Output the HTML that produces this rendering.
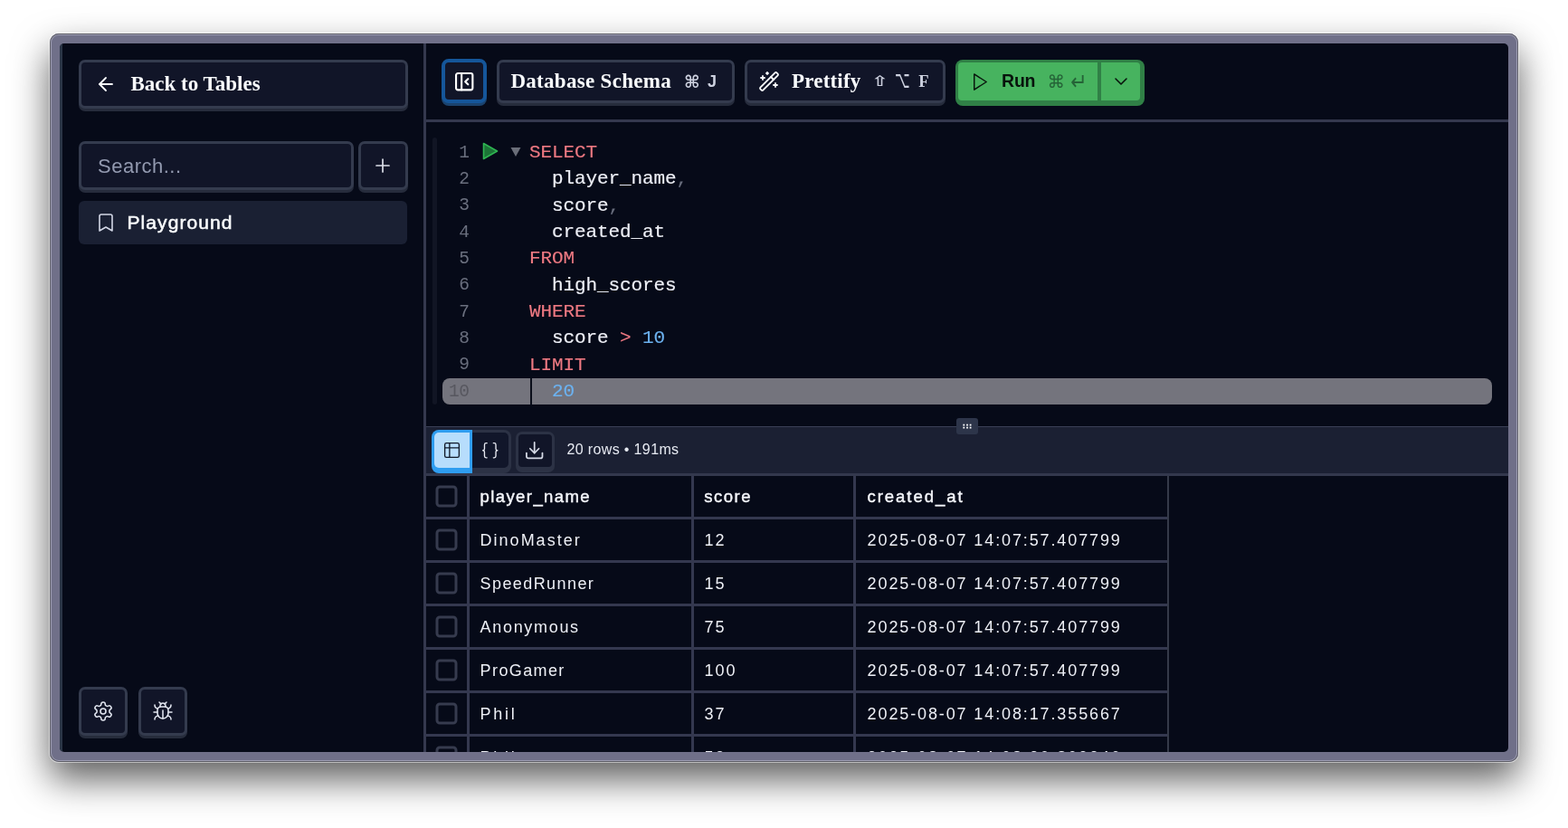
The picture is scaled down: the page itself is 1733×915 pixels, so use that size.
<!DOCTYPE html>
<html lang="en">
<head>
<meta charset="utf-8">
<title>SQL Playground</title>
<style>
*{box-sizing:border-box;margin:0;padding:0}
html,body{width:1733px;height:915px;overflow:hidden;background:#fff}
body{position:relative;font-family:"Liberation Sans",sans-serif;color:#f1f5f9}
.win{position:absolute;left:55px;top:37px;width:1623px;height:805px;background:#707089;border-radius:10px;
 box-shadow:inset 0 0 0 1px #5d5d66,inset 0 0 0 2px #9c9cb2,0 0 0 1px rgba(255,255,255,.5),0 19px 40px rgba(0,0,0,.64)}
.app{position:absolute;left:11px;top:11px;width:1601px;height:783px;background:#060a18;border-radius:5px;overflow:hidden;will-change:transform}
.abs{position:absolute}
.lbar{left:0;top:0;width:3px;height:783px;background:#2a3546}
.vdiv{left:402px;top:0;width:3px;height:783px;background:#34384e}
.btn{position:absolute;background:#111528;border:3px solid #343b4e;border-radius:7px;box-shadow:0 3px 0 #262c3c;display:flex;align-items:center;white-space:nowrap;color:#e2e6f0}
.serif{font-family:"Liberation Serif",serif;font-weight:700;font-size:23px;color:#f8fafc}
svg.ic{fill:none;stroke:currentColor;stroke-width:1.8;stroke-linecap:round;stroke-linejoin:round;display:block;position:absolute}
.kbd{color:#cdd1df;font-family:"DejaVu Sans","Liberation Sans",sans-serif;display:inline-block;line-height:1}
/* editor */
.code{font-family:"Liberation Mono",monospace;font-size:21px;letter-spacing:-0.1px;white-space:pre;line-height:29.33px}
.ln{position:absolute;left:405px;width:47.6px;text-align:right;color:#6a6f7e;height:29.33px;font-size:19.5px;letter-spacing:-.4px;margin-top:1.6px}
.cl{position:absolute;left:519px;height:29.33px;color:#eef0f7;margin-top:1.1px;-webkit-text-stroke:.15px currentColor}
.k{color:#ee7982}.n{color:#6cb2f0}.p{color:#6a6f7e}
/* table */
.tbl{font-family:"Liberation Sans",sans-serif;font-size:18px;white-space:pre;color:#eef0f6}
.hl{position:absolute;height:3px;background:#34384f}
.vl{position:absolute;width:3px;background:#34384f}
.cb{position:absolute;left:415px;width:24px;height:24px;border:3px solid #363b4e;border-radius:4.5px;background:#060a18;transform:translate(.5px,.5px)}
.cell{position:absolute;height:45px;line-height:45px}
.td{font-family:"Liberation Sans",sans-serif;font-size:18px;margin-left:-.4px;margin-top:.5px}
.th{font-family:"Liberation Sans",sans-serif;font-size:18.5px;font-weight:400;-webkit-text-stroke:.45px currentColor;color:#f3f5fa;margin-top:-.5px}
</style>
</head>
<body>
<div class="win">
 <div class="app">
  <div class="abs lbar"></div>
  <!-- sidebar -->
  <div class="btn serif" style="left:21px;top:18px;width:364px;height:54px">
   <svg class="ic" style="left:15px;top:12px" width="24" height="24" viewBox="0 0 24 24"><path d="m12 19-7-7 7-7"/><path d="M19 12H5"/></svg>
   <span style="position:absolute;left:54.5px;top:10.5px;letter-spacing:0px">Back to Tables</span>
  </div>
  <div class="btn" style="left:21px;top:108px;width:304px;height:54px">
   <span style="position:absolute;left:18px;top:11.5px;font-size:22px;color:#939ab0;letter-spacing:.5px">Search...</span>
  </div>
  <div class="btn" style="left:330px;top:108px;width:55px;height:54px">
   <svg class="ic" style="left:12px;top:12px;stroke-width:1.7;color:#dcdfe9" width="24" height="24" viewBox="0 0 24 24"><path d="M5 12h14"/><path d="M12 5v14"/></svg>
  </div>
  <div class="abs" style="left:21px;top:174px;width:363px;height:48px;background:#1a2033;border-radius:6px;color:#e2e6f0">
   <svg class="ic" style="left:18px;top:12px;stroke-width:1.6;color:#d3d7e6" width="24" height="24" viewBox="0 0 24 24"><path d="m19 21-7-4-7 4V5a2 2 0 0 1 2-2h10a2 2 0 0 1 2 2v16z"/></svg>
   <span style="position:absolute;left:53.5px;top:12px;font-size:21px;font-weight:400;-webkit-text-stroke:.55px currentColor;color:#f8fafc;letter-spacing:1.08px">Playground</span>
  </div>
  <div class="btn" style="left:21px;top:711px;width:54px;height:54px">
   <svg class="ic" style="left:12px;top:12px;stroke-width:1.55" width="24" height="24" viewBox="0 0 24 24"><path d="M12.22 2h-.44a2 2 0 0 0-2 2v.18a2 2 0 0 1-1 1.73l-.43.25a2 2 0 0 1-2 0l-.15-.08a2 2 0 0 0-2.73.73l-.22.38a2 2 0 0 0 .73 2.73l.15.1a2 2 0 0 1 1 1.72v.51a2 2 0 0 1-1 1.74l-.15.09a2 2 0 0 0-.73 2.73l.22.38a2 2 0 0 0 2.73.73l.15-.08a2 2 0 0 1 2 0l.43.25a2 2 0 0 1 1 1.73V20a2 2 0 0 0 2 2h.44a2 2 0 0 0 2-2v-.18a2 2 0 0 1 1-1.73l.43-.25a2 2 0 0 1 2 0l.15.08a2 2 0 0 0 2.73-.73l.22-.39a2 2 0 0 0-.73-2.73l-.15-.08a2 2 0 0 1-1-1.74v-.5a2 2 0 0 1 1-1.74l.15-.09a2 2 0 0 0 .73-2.73l-.22-.38a2 2 0 0 0-2.73-.73l-.15.08a2 2 0 0 1-2 0l-.43-.25a2 2 0 0 1-1-1.73V4a2 2 0 0 0-2-2z"/><circle cx="12" cy="12" r="3"/></svg>
  </div>
  <div class="btn" style="left:87px;top:711px;width:54px;height:54px">
   <svg class="ic" style="left:12px;top:12px;stroke-width:1.55" width="24" height="24" viewBox="0 0 24 24"><path d="m8 2 1.88 1.88"/><path d="M14.12 3.88 16 2"/><path d="M9 7.13v-1a3.003 3.003 0 1 1 6 0v1"/><path d="M12 20c-3.3 0-6-2.7-6-6v-3a4 4 0 0 1 4-4h4a4 4 0 0 1 4 4v3c0 3.3-2.7 6-6 6"/><path d="M12 20v-9"/><path d="M6.53 9C4.6 8.8 3 7.1 3 5"/><path d="M6 13H2"/><path d="M3 21c0-2.1 1.7-3.9 3.8-4"/><path d="M20.97 5c0 2.1-1.6 3.8-3.5 4"/><path d="M22 13h-4"/><path d="M17.2 17c2.1.1 3.8 1.9 3.8 4"/></svg>
  </div>
  <div class="abs vdiv"></div>
  <!-- toolbar -->
  <div class="abs" style="left:405px;top:84px;width:1196px;height:3px;background:#34384e"></div>
  <div class="btn" style="left:422px;top:17px;width:50px;height:49px;border-width:4px;border-color:#15569a;box-shadow:0 3px 0 #1b436e;border-radius:8px;color:#fff">
   <svg class="ic" style="left:8.8px;top:9.2px;stroke-width:2.1" width="24.4" height="24.4" viewBox="0 0 24 24"><rect width="18" height="18" x="3" y="3" rx="2"/><path d="M9 3v18"/><path d="m16 15-3-3 3-3"/></svg>
  </div>
  <div class="btn serif" style="left:483px;top:18px;width:263px;height:48px">
   <span style="position:absolute;left:12.4px;top:8px;letter-spacing:.3px">Database Schema</span>
   <span class="kbd" style="position:absolute;left:204px;top:12.3px;font-size:19px">⌘</span>
   <span class="kbd" style="position:absolute;left:230px;top:12.3px;font-size:18px;font-weight:700;font-family:'Liberation Sans',sans-serif">J</span>
  </div>
  <div class="btn serif" style="left:757px;top:18px;width:222px;height:48px">
   <svg class="ic" style="left:12px;top:9px" width="24" height="24" viewBox="0 0 24 24"><path d="m21.64 3.64-1.28-1.28a1.21 1.21 0 0 0-1.72 0L2.36 18.64a1.21 1.21 0 0 0 0 1.72l1.28 1.28a1.2 1.2 0 0 0 1.72 0L21.64 5.36a1.2 1.2 0 0 0 0-1.72"/><path d="m14 7 3 3"/><path d="M5 6v4"/><path d="M19 14v4"/><path d="M10 2v2"/><path d="M7 8H3"/><path d="M21 16h-4"/><path d="M11 3H9"/></svg>
   <span style="position:absolute;left:49px;top:8px;letter-spacing:.2px">Prettify</span>
   <span class="kbd" style="position:absolute;left:137.2px;top:13.4px;font-size:16px;transform:scale(1.38,1);transform-origin:0 0">⇧</span>
   <span class="kbd" style="position:absolute;left:162.5px;top:7px;font-size:17px;font-weight:200;transform:scale(.83,1.5);transform-origin:0 0">⌥</span>
   <span class="kbd" style="position:absolute;left:189.2px;top:12.2px;font-size:18.6px;font-weight:700;font-family:'Liberation Serif',serif">F</span>
  </div>
  <div class="abs" style="left:990px;top:18px;width:208.5px;height:48px;background:#308046;border-radius:8px;box-shadow:0 3px 0 #308046"></div>
  <div class="abs" style="left:993px;top:21px;width:154px;height:42px;background:#47b35f;border-radius:4px 0 0 4px;color:#08130c">
   <svg class="ic" style="left:12.3px;top:9.5px;stroke-width:1.5" width="23" height="23" viewBox="0 0 24 24"><polygon points="6 3 20 12 6 21 6 3"/></svg>
   <span style="position:absolute;left:48px;top:9px;font-size:19.5px;font-weight:700;letter-spacing:-.2px">Run</span>
   <span class="kbd" style="position:absolute;left:98.5px;top:12.4px;font-size:19.4px;color:#256337">⌘</span>
   <span class="kbd" style="position:absolute;left:124px;top:9.3px;font-size:22px;color:#256337;transform:scale(1,1.16);transform-origin:0 0">↵</span>
  </div>
  <div class="abs" style="left:1151.3px;top:21px;width:43px;height:42px;background:#47b35f;border-radius:0 4px 4px 0;color:#08130c">
   <svg class="ic" style="left:9.3px;top:8.8px;stroke-width:1.6" width="24" height="24" viewBox="0 0 24 24"><path d="m6 9 6 6 6-6"/></svg>
  </div>
  <!-- editor -->
  <div class="abs" style="left:412px;top:104px;width:4.5px;height:295px;background:#111524;border-radius:2.5px"></div>
  <div class="abs" style="left:423px;top:370px;width:1160px;height:29px;background:#74747d;border-radius:8px"></div>
  <div class="abs" style="left:520px;top:370px;width:2px;height:29px;background:#0a0e1a"></div>
  <div class="code">
   <div class="ln" style="top:105px">1</div><div class="cl" style="top:105px"><span class="k">SELECT</span></div>
   <div class="ln" style="top:134.33px">2</div><div class="cl" style="top:134.33px">  player_name<span class="p">,</span></div>
   <div class="ln" style="top:163.67px">3</div><div class="cl" style="top:163.67px">  score<span class="p">,</span></div>
   <div class="ln" style="top:193px">4</div><div class="cl" style="top:193px">  created_at</div>
   <div class="ln" style="top:222.33px">5</div><div class="cl" style="top:222.33px"><span class="k">FROM</span></div>
   <div class="ln" style="top:251.67px">6</div><div class="cl" style="top:251.67px">  high_scores</div>
   <div class="ln" style="top:281px">7</div><div class="cl" style="top:281px"><span class="k">WHERE</span></div>
   <div class="ln" style="top:310.33px">8</div><div class="cl" style="top:310.33px">  score <span class="k">&gt;</span> <span class="n">10</span></div>
   <div class="ln" style="top:339.67px">9</div><div class="cl" style="top:339.67px"><span class="k">LIMIT</span></div>
   <div class="ln" style="top:369px;color:#57575f">10</div><div class="cl" style="top:369px">  <span class="n">20</span></div>
  </div>
  <svg class="abs" style="left:466px;top:108px" width="20" height="22" viewBox="0 0 20 22"><path d="M2.5 2.5 L17.5 11 L2.5 19.5 Z" fill="#1c7437" stroke="#2fb552" stroke-width="1.6" stroke-linejoin="round"/></svg>
  <svg class="abs" style="left:498px;top:114px" width="12" height="12" viewBox="0 0 12 12"><path d="M0.5 1 L11.5 1 L6 11 Z" fill="#6a6e79"/></svg>
  <!-- results bar -->
  <div class="abs" style="left:405px;top:422.5px;width:1196px;height:55.5px;background:#1b2033;border-top:1px solid #3a4056;border-bottom:3px solid #33384d"></div>
  <div class="abs" style="left:991px;top:414px;width:24px;height:18px;background:#2d354a;border-radius:3px"><svg style="position:absolute;left:0;top:0" width="24" height="18" viewBox="0 0 24 18" fill="#fff"><rect x="7.4" y="6.7" width="1.8" height="1.8"/><rect x="11.1" y="6.7" width="1.8" height="1.8"/><rect x="14.7" y="6.7" width="1.8" height="1.8"/><rect x="7.4" y="9.7" width="1.8" height="1.8"/><rect x="11.1" y="9.7" width="1.8" height="1.8"/><rect x="14.7" y="9.7" width="1.8" height="1.8"/></svg></div>
  <div class="abs" style="left:411px;top:427.2px;width:45px;height:48px;background:#2f9df0;border-radius:8px 0 0 8px"></div>
  <div class="abs" style="left:414px;top:430.2px;width:39.3px;height:39px;background:#b7ddfc;border-radius:5px 0 0 5px;color:#101827">
   <svg class="ic" style="left:9.05px;top:8.7px;stroke-width:1.5" width="21" height="21" viewBox="0 0 24 24"><path d="M9 3H5a2 2 0 0 0-2 2v4m6-6h10a2 2 0 0 1 2 2v4M9 3v18m0 0h10a2 2 0 0 0 2-2V9M9 21H5a2 2 0 0 1-2-2V9m0 0h18"/></svg>
  </div>
  <div class="abs" style="left:456px;top:427.2px;width:43px;height:48px;background:#2c3245;border-radius:0 8px 8px 0"></div>
  <div class="abs" style="left:456px;top:430.2px;width:40px;height:39px;background:#11162a;border-radius:0 5px 5px 0;color:#e8eaf2">
   <svg class="ic" style="left:8.8px;top:8.4px;stroke-width:1.5" width="21.5" height="21.5" viewBox="0 0 24 24"><path d="M8 3H7a2 2 0 0 0-2 2v5a2 2 0 0 1-2 2 2 2 0 0 1 2 2v5c0 1.1.9 2 2 2h1"/><path d="M16 21h1a2 2 0 0 0 2-2v-5c0-1.1.9-2 2-2a2 2 0 0 1-2-2V5a2 2 0 0 0-2-2h-1"/></svg>
  </div>
  <div class="btn" style="left:504px;top:428.6px;width:43px;height:42px;border-color:#2c3245;box-shadow:0 3px 0 #2c3245">
   <svg class="ic" style="left:6.2px;top:6.4px;stroke-width:1.8;color:#d6dae6" width="23.4" height="23.4" viewBox="0 0 24 24"><path d="M21 15v4a2 2 0 0 1-2 2H5a2 2 0 0 1-2-2v-4"/><path d="m7 10 5 5 5-5"/><path d="M12 15V3"/></svg>
  </div>
  <span class="abs" style="left:560.5px;top:439.5px;font-size:16px;letter-spacing:.36px;color:#e6e9f1;white-space:nowrap">20 rows • 191ms</span>
  <!-- table -->
  <div class="tbl">
   <div class="hl" style="left:405px;top:523px;width:819px"></div>
   <div class="hl" style="left:405px;top:571px;width:819px"></div>
   <div class="hl" style="left:405px;top:619px;width:819px"></div>
   <div class="hl" style="left:405px;top:667px;width:819px"></div>
   <div class="hl" style="left:405px;top:715px;width:819px"></div>
   <div class="hl" style="left:405px;top:763px;width:819px"></div>
   <div class="vl" style="left:450px;top:478px;height:305px"></div>
   <div class="vl" style="left:698px;top:478px;height:305px"></div>
   <div class="vl" style="left:877px;top:478px;height:305px"></div>
   <div class="vl" style="left:1224px;top:478px;height:305px;width:1.8px;background:#353a49"></div>
   <div class="cb" style="top:488px"></div><div class="cell th" style="left:464.5px;top:478px;letter-spacing:1.42px">player_name</div><div class="cell th" style="left:712.2px;top:478px;letter-spacing:1.52px">score</div><div class="cell th" style="left:892.4px;top:478px;letter-spacing:1.99px">created_at</div>
   <div class="cb" style="top:536px"></div><div class="cell td" style="left:465px;top:526px;letter-spacing:2.0px">DinoMaster</div><div class="cell td" style="left:713px;top:526px;letter-spacing:1.9px">12</div><div class="cell td" style="left:893px;top:526px;letter-spacing:1.88px">2025-08-07 14:07:57.407799</div>
   <div class="cb" style="top:584px"></div><div class="cell td" style="left:465px;top:574px;letter-spacing:1.41px">SpeedRunner</div><div class="cell td" style="left:713px;top:574px;letter-spacing:1.9px">15</div><div class="cell td" style="left:893px;top:574px;letter-spacing:1.88px">2025-08-07 14:07:57.407799</div>
   <div class="cb" style="top:632px"></div><div class="cell td" style="left:465px;top:622px;letter-spacing:1.68px">Anonymous</div><div class="cell td" style="left:713px;top:622px;letter-spacing:1.9px">75</div><div class="cell td" style="left:893px;top:622px;letter-spacing:1.88px">2025-08-07 14:07:57.407799</div>
   <div class="cb" style="top:680px"></div><div class="cell td" style="left:465px;top:670px;letter-spacing:1.39px">ProGamer</div><div class="cell td" style="left:713px;top:670px;letter-spacing:1.9px">100</div><div class="cell td" style="left:893px;top:670px;letter-spacing:1.88px">2025-08-07 14:07:57.407799</div>
   <div class="cb" style="top:728px"></div><div class="cell td" style="left:465px;top:718px;letter-spacing:2.7px">Phil</div><div class="cell td" style="left:713px;top:718px;letter-spacing:1.9px">37</div><div class="cell td" style="left:893px;top:718px;letter-spacing:1.88px">2025-08-07 14:08:17.355667</div>
   <div class="cb" style="top:776px"></div><div class="cell td" style="left:465px;top:766px;letter-spacing:2.7px">Phil</div><div class="cell td" style="left:713px;top:766px;letter-spacing:1.9px">52</div><div class="cell td" style="left:893px;top:766px;letter-spacing:1.88px">2025-08-07 14:08:20.809246</div>
  </div>
 </div>
</div>
</body>
</html>
